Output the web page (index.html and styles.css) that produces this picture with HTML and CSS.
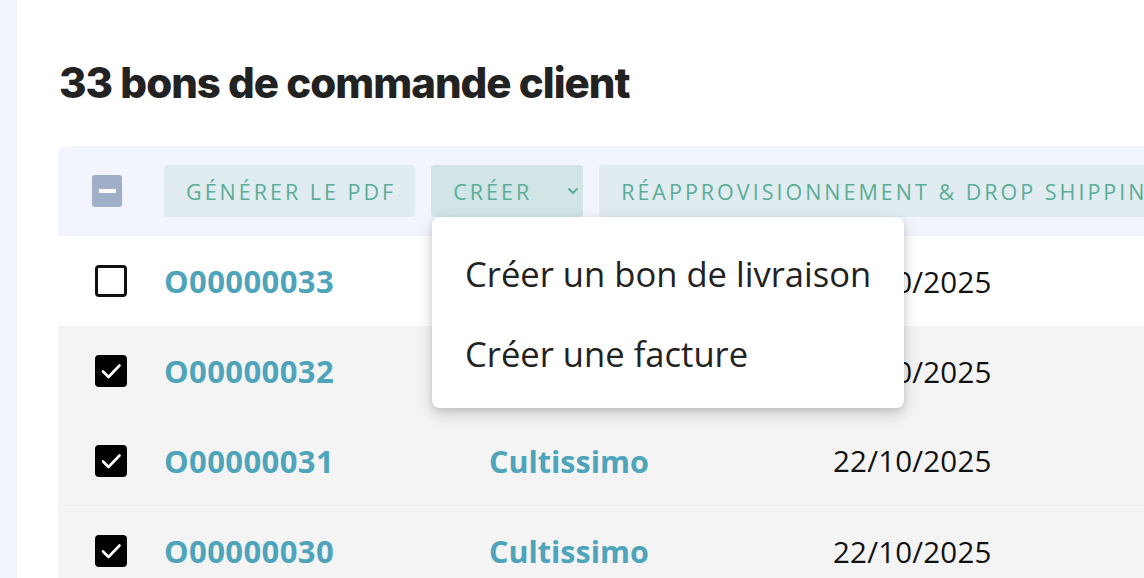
FILE: index.html
```html
<!DOCTYPE html>
<html lang="fr">
<head>
<meta charset="utf-8">
<link rel="stylesheet" href="styles.css">
</head>
<body>
<div class="page">
  <aside class="strip"></aside>
  <main class="main">
    <h1 class="title">33 bons de commande client</h1>
    <div class="table">
      <div class="toolbar">
        <span class="cb-mixed"><span class="bar"></span></span>
        <button class="btn">GÉNÉRER LE PDF</button>
        <button class="btn btn-active">CRÉER
          <svg class="chev" width="12" height="8" viewBox="0 0 12 8"><path d="M2 2 L6 6 L10 2" fill="none" stroke="#5aad96" stroke-width="1.8" stroke-linecap="round" stroke-linejoin="round"/></svg>
        </button>
        <button class="btn btn-wide">RÉAPPROVISIONNEMENT &amp; DROP SHIPPING</button>
      </div>
      <div class="row">
        <span class="cb"></span>
        <span class="ref">O00000033</span>
        <span class="client">Cultissimo</span>
        <span class="date">22/10/2025</span>
      </div>
      <div class="row row-sel">
        <span class="cb cb-on"><svg width="24" height="20" viewBox="0 0 24 20"><path d="M4 10.5 L9.5 16 L20.5 4.5" fill="none" stroke="#fff" stroke-width="2.6" stroke-linecap="round" stroke-linejoin="round"/></svg></span>
        <span class="ref">O00000032</span>
        <span class="client">Cultissimo</span>
        <span class="date">22/10/2025</span>
      </div>
      <div class="row row-sel row-line">
        <span class="cb cb-on"><svg width="24" height="20" viewBox="0 0 24 20"><path d="M4 10.5 L9.5 16 L20.5 4.5" fill="none" stroke="#fff" stroke-width="2.6" stroke-linecap="round" stroke-linejoin="round"/></svg></span>
        <span class="ref">O00000031</span>
        <span class="client">Cultissimo</span>
        <span class="date">22/10/2025</span>
      </div>
      <div class="row row-sel">
        <span class="cb cb-on"><svg width="24" height="20" viewBox="0 0 24 20"><path d="M4 10.5 L9.5 16 L20.5 4.5" fill="none" stroke="#fff" stroke-width="2.6" stroke-linecap="round" stroke-linejoin="round"/></svg></span>
        <span class="ref">O00000030</span>
        <span class="client">Cultissimo</span>
        <span class="date">22/10/2025</span>
      </div>
      <ul class="menu">
        <li class="menu-item">Créer un bon de livraison</li>
        <li class="menu-item">Créer une facture</li>
      </ul>
    </div>
  </main>
</div>
</body>
</html>
```

FILE: styles.css
```css
* { box-sizing: border-box; }
html, body { margin: 0; padding: 0; }
body {
  width: 1144px;
  height: 578px;
  overflow: hidden;
  background: #ffffff;
  font-family: "Open Sans", "Noto Sans", sans-serif;
  color: #1f1f1f;
}
.page {
  display: flex;
  height: 578px;
}
.strip {
  width: 17px;
  flex: none;
  background: #f2f5fd;
  border-right: 1px solid #eef1f8;
}
.main {
  flex: 1;
  min-width: 0;
  padding: 55px 0 0 41px;
}
.title {
  margin: 0 0 36px 0;
  padding-left: 1px;
  font-family: "Inter", sans-serif;
  font-weight: 800;
  font-size: 42px;
  letter-spacing: -1px;
  color: #222222;
  height: 55px;
  display: flex;
  align-items: center;
}
.table {
  position: relative;
  width: 1200px;
}
.toolbar {
  height: 90px;
  background: #f2f5fd;
  border-radius: 8px 8px 0 0;
  display: flex;
  align-items: center;
  padding-left: 34px;
}
.cb-mixed {
  width: 30px;
  height: 32px;
  border-radius: 3px;
  background: #a0aec8;
  display: flex;
  align-items: center;
  justify-content: center;
  margin-right: 42px;
  flex: none;
}
.cb-mixed .bar {
  width: 17px;
  height: 4px;
  background: #ffffff;
}
.btn {
  height: 52px;
  border: none;
  border-radius: 4px;
  background: #e1ecf1;
  color: #5aad96;
  font-family: "Open Sans", sans-serif;
  font-size: 21.5px;
  letter-spacing: 3px;
  padding: 0 19px 0 22px;
  margin-right: 16px;
  display: flex;
  align-items: center;
  gap: 35px;
  white-space: nowrap;
  flex: none;
}
.btn-active {
  background: #d1e4e6;
  padding-right: 4px;
}
.chev { flex: none; }
.row {
  height: 90px;
  display: grid;
  grid-template-columns: 69px 325px 344px 1fr;
  align-items: center;
  padding-left: 37px;
  background: #ffffff;
}
.row-sel { background: #f4f4f4; }
.row-line { border-bottom: 1px solid #eaf0f1; }
.cb {
  width: 32px;
  height: 32px;
  border: 3px solid #111111;
  border-radius: 4px;
  display: flex;
  align-items: center;
  justify-content: center;
}
.cb-on {
  background: #000000;
  border-color: #000000;
}
.ref, .client {
  font-weight: 700;
  color: #4ea4ba;
}
.ref { font-size: 31px; letter-spacing: 0.4px; }
.client { font-size: 30.5px; }
.date {
  color: #111111;
  font-size: 29.5px;
  letter-spacing: 0.2px;
}
.menu {
  position: absolute;
  left: 374px;
  top: 71px;
  width: 472px;
  margin: 0;
  padding: 16px 0 15px 0;
  list-style: none;
  background: #ffffff;
  border-radius: 8px;
  box-shadow: 0 6px 16px rgba(0,0,0,0.18), 0 2px 6px rgba(0,0,0,0.08);
}
.menu-item {
  height: 80px;
  display: flex;
  align-items: center;
  padding-left: 33px;
  font-size: 34.6px;
  color: #222222;
}
```
